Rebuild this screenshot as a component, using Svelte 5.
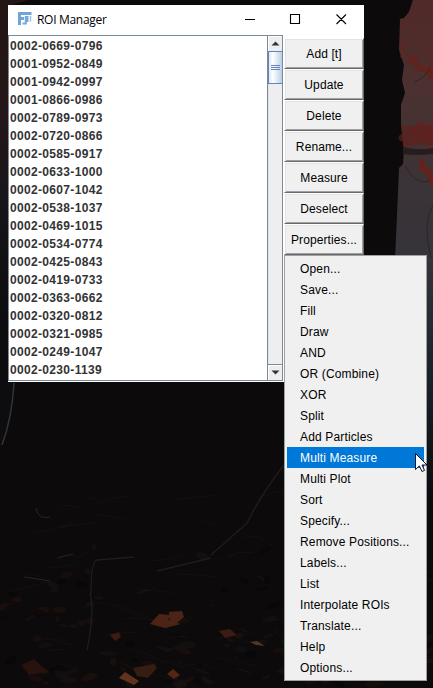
<script>
  const rois = ['0002-0669-0796', '0001-0952-0849', '0001-0942-0997', '0001-0866-0986', '0002-0789-0973', '0002-0720-0866', '0002-0585-0917', '0002-0633-1000', '0002-0607-1042', '0002-0538-1037', '0002-0469-1015', '0002-0534-0774', '0002-0425-0843', '0002-0419-0733', '0002-0363-0662', '0002-0320-0812', '0002-0321-0985', '0002-0249-1047', '0002-0230-1139'];
  const buttons = ['Add [t]', 'Update', 'Delete', 'Rename...', 'Measure', 'Deselect', 'Properties...'];
  const items = ['Open...', 'Save...', 'Fill', 'Draw', 'AND', 'OR (Combine)', 'XOR', 'Split', 'Add Particles', 'Multi Measure', 'Multi Plot', 'Sort', 'Specify...', 'Remove Positions...', 'Labels...', 'List', 'Interpolate ROIs', 'Translate...', 'Help', 'Options...'];
  let active = $state('Multi Measure');

  // Seeded scatter of leaves and twigs over the forest floor.
  let seed = 17;
  const rnd = () => (seed = (seed * 16807) % 2147483647) / 2147483647;
  const litter = Array.from({ length: 150 }, () => {
    const x = rnd() * 433, y = 535 + Math.sqrt(rnd()) * 150;
    return { x, y, rx: 2 + rnd() * 8, ry: 1 + rnd() * 3, a: rnd() * 60 - 30, c: ['#21120f', '#1b1313', '#141616', '#25130e', '#080708'][Math.floor(rnd() * 5)] };
  });
  const twigs = Array.from({ length: 65 }, () => {
    const x = rnd() * 433, y = 490 + rnd() * 190;
    return `M${x} ${y}q${rnd() * 18} ${rnd() * 14 - 7} ${15 + rnd() * 28} ${rnd() * 24 - 10}`;
  });
  const foliage = Array.from({ length: 130 }, (_, i) => {
    const band = i % 3, t = rnd();
    return band === 0 ? { x: 401 + t * 32, y: 46 + t * 24 + rnd() * 10, r: 1 + rnd() * 2 }
      : band === 1 ? { x: 402 + t * 31, y: 123 + rnd() * 22, r: 1 + rnd() * 3 }
      : { x: 420 + t * 13, y: 159 + t * 15 + rnd() * 10, r: 1 + rnd() * 2 };
  });
</script>

<main>
  <svg class="backdrop" width="433" height="688" viewBox="0 0 433 688" aria-hidden="true">
    <defs>
      <linearGradient id="side" x2="0" y2="1">
        <stop offset="0" stop-color="#241614" /><stop offset=".25" stop-color="#241719" /><stop offset=".45" stop-color="#16161a" /><stop offset=".7" stop-color="#0d0d0f" />
      </linearGradient>
      <linearGradient id="trunk" x2="0" y2="1">
        <stop offset="0" stop-color="#492b29" /><stop offset=".35" stop-color="#4b3130" /><stop offset=".65" stop-color="#3c3336" /><stop offset="1" stop-color="#35333a" />
      </linearGradient>
      <linearGradient id="edge" x2="0" y2="1">
        <stop offset="0" stop-color="#34343b" /><stop offset=".5" stop-color="#182028" /><stop offset="1" stop-color="#0b0b0d" />
      </linearGradient>
    </defs>
    <rect width="433" height="688" fill="#0c0a0b" />
    <path d="M0 0H28L8 6V381H13Q11 421 0 450Z" fill="url(#side)" />
    <path d="M14 383Q12 418 2 445" fill="none" stroke="#343437" stroke-width="1.5" />
    <path d="M413 0L409 12 404 18 400 19 399 50 404 65 402 80 405 93 401 105 401 124 404 150 403 164 399 168 397 215 395 260H433V0Z" fill="url(#trunk)" />
    <path d="M413 0L409 12 404 18 400 19 400 48Q418 42 433 73V0Z" fill="#532a28" opacity=".55" />
    <g class="leaves">
      {#each foliage as f}<circle cx={f.x} cy={f.y} r={f.r} fill="#66231e" opacity=".6" />{/each}
      <path d="M401 125H433V145H403Z" fill="#5c221e" opacity=".6" />
      <path d="M403 147Q420 151 433 148V154Q416 156 403 154Z" fill="#291c1d" />
    </g>
    <path d="M433 205Q422 223 431 258M414 82Q424 79 430 68M405 166Q416 186 430 181" fill="none" stroke="#302427" />
    <rect x="427" y="260" width="6" height="245" fill="url(#edge)" />
    <g class="floor">
      {#each litter as l}<ellipse cx={l.x} cy={l.y} rx={l.rx} ry={l.ry} transform={`rotate(${l.a} ${l.x} ${l.y})`} fill={l.c} opacity=".55" />{/each}
      {#each twigs as d}<path {d} fill="none" stroke="#242021" stroke-width=".7" opacity=".45" />{/each}
      <path d="M284 465Q261 494 247 523L211 555M91 594Q91 561 97 560L134 557M157 571L211 558M90 593Q95 612 87 650" fill="none" stroke="#1f1c1d" stroke-width="1.4" />
      <path d="M36 508Q38 520 50 517M24 577L50 581M57 558L73 554" fill="none" stroke="#2a2424" />
      <path d="M150 624L159 614 171 615 168 620 181 624 165 628ZM169 612L182 611 184 617 176 624 170 622Z" fill="#4b2417" />
      <path d="M110 635L119 632 121 637 115 641ZM219 631L230 629 237 635 225 638Z" fill="#3c1b13" />
      <path d="M119 678L125 672 139 681 134 685Z" fill="#63321d" />
      <path d="M133 668L154 664 157 668 148 678 137 676Z" fill="#361d11" />
      <path d="M167 674L173 669 180 675 174 679Z" fill="#542414" />
      <path d="M250 642L257 641 265 646 256 645Z" fill="#543529" />
      <path d="M21 665L34 659 48 672 29 675Z" fill="#27120d" />
    </g>
  </svg>

  <section class="window">
    <header>
      <svg class="logo" width="14" height="14" viewBox="0 0 14 14" aria-hidden="true">
        <path d="M0 0H13.5V3H3V5H6V8H3V13H0Z" fill="#6fa6d9" />
        <path d="M7.8 4V11.5H4.5M9.5 4V10" fill="none" stroke="#76a8d8" stroke-width="2" />
        <path d="M12.5 4V9.5" stroke="#9dbfe0" stroke-width="1.5" />
      </svg>
      <h1>ROI Manager</h1>
      <svg class="controls" width="110" height="14" viewBox="0 0 110 14" aria-hidden="true">
        <path d="M1 7.5H11M46.5 2.5H55.5V11.5H46.5ZM92.5 2.5L102 12M102 2.5L92.5 12" fill="none" stroke="#000" stroke-width="1.1" />
      </svg>
    </header>
    <div class="content">
      <div class="list">
        <ul>{#each rois as roi}<li>{roi}</li>{/each}</ul>
        <div class="scrollbar">
          <span class="arrow"><svg width="9" height="5" viewBox="0 0 9 5"><path d="M.5 4.5L4.5 .5 8.5 4.5Z" fill="#333" /></svg></span>
          <span class="thumb"><i></i><i></i><i></i></span>
          <span class="track"></span>
          <span class="arrow down"><svg width="9" height="5" viewBox="0 0 9 5"><path d="M.5 .5L4.5 4.5 8.5 .5Z" fill="#333" /></svg></span>
        </div>
      </div>
      <div class="buttons">{#each buttons as label}<button>{label}</button>{/each}</div>
    </div>
  </section>

  <nav class="menu">
    {#each items as item}
      <div class="item" class:active={active === item} role="menuitem" tabindex="-1" onmouseenter={() => (active = item)}>{item}</div>
    {/each}
  </nav>
  <svg class="cursor" width="13" height="20" viewBox="0 0 13 20" aria-hidden="true">
    <path d="M.5 .5V16.5L4.3 12.9 7 18.5 9.5 17.4 7 12H12Z" fill="#fff" stroke="#101525" />
  </svg>
</main>

<style>
  :global(body) { margin: 0; overflow: hidden; }
  main { position: relative; width: 433px; height: 688px; overflow: hidden; background: #0c0a0b; font-family: "Liberation Sans", Arial, sans-serif; font-size: 12px; color: #000; }
  .backdrop { position: absolute; inset: 0; }
  .leaves, .floor { filter: blur(.7px); }
  .window { position: absolute; left: 8px; top: 5px; width: 356px; height: 377px; background: #fff; display: flex; flex-direction: column; }
  header { height: 30px; display: flex; align-items: center; box-sizing: border-box; padding: 0 15px 2px 10px; }
  .logo { margin-right: 5px; }
  h1 { margin: 0; font: 12px "Open Sans", "Noto Sans", sans-serif; letter-spacing: -.3px; }
  .controls { margin-left: auto; margin-right: -5px; }
  .content { flex: 1; display: flex; align-items: flex-start; }
  .list { width: 275px; height: 346px; box-sizing: border-box; border: 1px solid #7a8a99; display: flex; }
  ul { list-style: none; padding: 1px 0 0 1px; margin: 0; flex: 1; }
  li { height: 18px; line-height: 18px; color: #333; font-weight: bold; letter-spacing: .33px; }
  .scrollbar { width: 15px; box-sizing: border-box; background: #eee; border-left: 1px solid #7a8a99; display: flex; flex-direction: column; }
  .arrow { height: 15px; flex: none; display: flex; align-items: center; justify-content: center; box-shadow: inset 1px 1px #fff; }
  .thumb { height: 33px; flex: none; box-sizing: border-box; border: 1px solid #6382bf; border-right: 0; background: linear-gradient(90deg, #dce8f3, #fff 30%, #b8cfe5); display: flex; flex-direction: column; align-items: center; justify-content: center; gap: 1px; }
  .thumb i { width: 9px; height: 1px; background: #6382bf; }
  .track { flex: 1; box-shadow: inset 1px 0 #dce4eb; }
  .down { border-top: 1px solid #7a8a99; }
  .buttons { display: flex; flex-direction: column; width: 80px; margin-left: 1px; padding-top: 3px; }
  button { height: 31px; margin: 0; padding: 1px 0 0; border: 1px solid; border-color: #fff #696969 #696969 #fff; box-shadow: inset 1px 1px #e3e3e3, inset -1px -1px #a0a0a0; background: #f0f0f0; color: #000; font: 12px "Liberation Sans", Arial, sans-serif; letter-spacing: .1px; white-space: nowrap; }
  .menu { position: absolute; left: 284px; top: 255px; width: 143px; height: 426px; box-sizing: border-box; border: 1px solid #a0a0a0; padding: 2px; background: #f0f0f0; }
  .item { height: 21px; box-sizing: border-box; padding: 1px 0 0 13px; line-height: 20px; letter-spacing: .15px; white-space: nowrap; }
  .active { background: #0078d7; color: #fff; }
  .cursor { position: absolute; left: 415px; top: 453px; }
</style>
